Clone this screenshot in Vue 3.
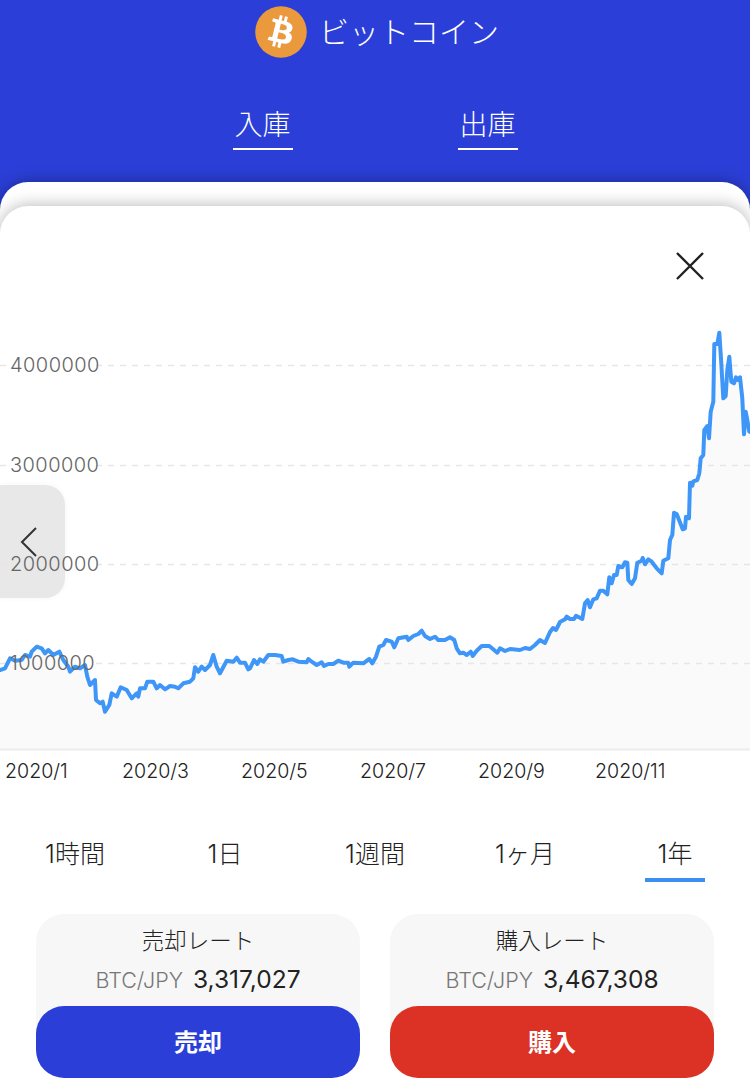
<script setup>
import { computed } from 'vue'

const ranges = ['1時間', '1日', '1週間', '1ヶ月', '1年']
const activeRange = '1年'

const rates = [
  { title: '売却レート', value: '3,317,027', action: '売却', kind: 'sell' },
  { title: '購入レート', value: '3,467,308', action: '購入', kind: 'buy' },
]

const xLabels = [
  { x: 5, text: '2020/1' },
  { x: 122, text: '2020/3' },
  { x: 241, text: '2020/5' },
  { x: 360, text: '2020/7' },
  { x: 478, text: '2020/9' },
  { x: 595, text: '2020/11' },
]

const yLabels = [
  { y: 365, text: '4000000' },
  { y: 465, text: '3000000' },
  { y: 564, text: '2000000' },
  { y: 663, text: '1000000' },
]

// traced in three stretches, each as 3x offsets from its own origin
const stretch = (ox, oy, pts) => pts.map(([x, y]) => [ox + x / 3, oy + y / 3])

const trace = [
  ...stretch(0, 470, [
    [0, 600], [15, 595], [30, 565], [45, 572], [65, 570], [75, 555], [90, 560], [95, 545], [110, 530], [125, 535],
    [135, 550], [145, 540], [160, 555], [178, 545], [190, 570], [205, 590], [210, 605], [225, 590], [240, 595],
    [255, 585], [262, 620], [270, 645], [285, 630], [288, 690], [300, 700], [308, 695], [315, 725], [328, 705],
    [335, 670], [350, 680], [362, 652], [380, 660], [395, 685], [410, 670], [415, 680], [420, 655], [435, 655],
    [442, 635], [460, 635], [470, 655], [480, 645], [495, 658], [510, 648], [525, 650], [535, 655], [550, 640],
    [570, 635], [580, 625], [585, 592], [595, 605], [605, 590], [615, 600], [630, 585], [640, 555], [650, 590],
    [660, 610], [680, 572], [700, 575], [710, 563], [720, 578], [735, 578], [745, 598],
  ]),
  ...stretch(250, 560, [
    [0, 325], [12, 300], [22, 312], [30, 298], [40, 305], [55, 285], [75, 285], [95, 288], [100, 305], [115, 300],
    [128, 298], [145, 305], [170, 307], [175, 297], [185, 305], [200, 315], [215, 307], [222, 318], [235, 312],
    [250, 312], [265, 302], [280, 308], [295, 308], [298, 320], [310, 308], [340, 310], [358, 297], [367, 310],
    [378, 290], [388, 260], [400, 255], [408, 240], [425, 245], [433, 262], [445, 235], [470, 230], [475, 240],
    [490, 228], [505, 222], [515, 212], [525, 228], [540, 237], [555, 230], [565, 240], [585, 240], [600, 232],
    [613, 240], [620, 265], [630, 280], [640, 278], [650, 285], [662, 275], [668, 288], [680, 272], [695, 258],
    [718, 258], [735, 272], [742, 278], [750, 265],
  ]),
  [505, 651], [510, 649], [520, 650], [525, 648], [530, 649], [535, 645], [540, 640], [545, 643], [550, 632],
  [553, 628], [556, 630], [560, 622],
  ...stretch(500, 320, [
    [195, 898], [200, 890], [210, 897], [222, 897], [228, 887], [240, 893], [247, 897], [255, 850], [263, 840],
    [270, 862], [280, 838], [290, 835], [300, 812], [310, 812], [322, 823], [328, 772], [335, 790], [342, 765],
    [350, 765], [355, 738], [367, 742], [375, 727], [382, 728], [385, 780], [395, 792], [405, 775], [412, 728],
    [425, 722], [428, 714], [435, 733], [445, 718], [455, 725], [470, 745], [485, 760], [490, 722], [505, 715],
    [510, 660], [517, 645], [522, 578], [530, 582], [548, 628], [555, 625], [558, 590], [567, 595], [570, 488],
    [577, 497], [580, 484], [592, 480], [598, 460], [602, 415], [610, 405], [613, 330], [622, 318], [627, 355],
    [632, 275], [640, 245], [643, 72], [652, 72], [658, 38], [664, 130], [670, 235], [677, 228], [682, 150],
    [688, 110], [694, 185], [702, 190], [708, 172], [713, 180], [720, 172], [727, 235], [732, 343], [737, 275],
    [742, 300], [748, 335], [750, 335],
  ]),
]

const linePoints = computed(() => trace.map(([x, y]) => `${x.toFixed(1)},${y.toFixed(1)}`).join(' '))
const areaPoints = computed(() => `0,749 ${linePoints.value} 750,749`)
</script>

<template>
  <div class="page">
    <header class="header">
      <div class="coin">
        <svg class="coin-icon" viewBox="0 0 24 24">
          <circle cx="12" cy="12" r="11.9" fill="#ea9a3c" />
          <path fill="#fff" d="M17.288 10.291c.24-1.59-.974-2.45-2.64-3.03l.54-2.153-1.315-.33-.525 2.107c-.345-.087-.705-.167-1.064-.25l.526-2.127-1.32-.33-.54 2.165c-.285-.067-.565-.132-.84-.2l-1.815-.45-.35 1.407s.975.225.955.236c.535.136.63.486.615.766l-1.477 5.92c-.075.166-.24.406-.614.314.015.02-.96-.24-.96-.24l-.66 1.51 1.71.426.93.242-.54 2.19 1.32.327.54-2.17c.36.1.705.19 1.05.273l-.51 2.154 1.32.33.545-2.19c2.24.427 3.93.257 4.64-1.774.57-1.637-.03-2.58-1.217-3.196.854-.193 1.5-.76 1.68-1.93h.01zm-3.01 4.22c-.404 1.64-3.157.75-4.05.53l.72-2.9c.896.23 3.757.67 3.33 2.37zm.41-4.24c-.37 1.49-2.662.735-3.405.55l.654-2.64c.744.18 3.137.524 2.75 2.084v.006z" />
        </svg>
        <span class="coin-name">ビットコイン</span>
      </div>
      <nav class="transfer">
        <a class="transfer-link">入庫</a>
        <a class="transfer-link">出庫</a>
      </nav>
    </header>

    <div class="back-card"></div>

    <section class="sheet">
      <div class="sheet-top">
        <button class="close" aria-label="close">
          <svg width="30" height="30" viewBox="0 0 30 30">
            <path d="M2 2 L28 28 M28 2 L2 28" stroke="#222" stroke-width="2.4" fill="none" />
          </svg>
        </button>
      </div>

      <div class="chart">
        <button class="prev" aria-label="previous">
          <svg width="20" height="32" viewBox="0 0 20 32">
            <path d="M17 2 L3 16 L17 30" stroke="#333" stroke-width="2" fill="none" />
          </svg>
        </button>
        <svg class="plot" width="750" height="480" viewBox="0 310 750 480">
          <polygon :points="areaPoints" fill="#fafafa" />
          <path
            v-for="row in yLabels"
            :key="row.y"
            :d="`M0 ${row.y}.5 H6 M96 ${row.y}.5 H750`"
            stroke="#e6e6e6"
            stroke-width="1.3"
            stroke-dasharray="6 6"
            fill="none"
          />
          <line x1="0" y1="749.5" x2="750" y2="749.5" stroke="#ececec" stroke-width="2" />
          <polyline :points="linePoints" fill="none" stroke="#3d96f8" stroke-width="4" stroke-linejoin="round" stroke-linecap="round" />
          <text v-for="row in yLabels" :key="row.text" class="y-label" x="10" :y="row.y + 6.5">{{ row.text }}</text>
          <text v-for="col in xLabels" :key="col.text" class="x-label" :x="col.x" y="778">{{ col.text }}</text>
        </svg>
      </div>

      <div class="ranges">
        <div v-for="r in ranges" :key="r" class="range" :class="{ active: r === activeRange }">{{ r }}</div>
      </div>

      <div class="rates">
        <div v-for="rate in rates" :key="rate.kind" class="rate-card">
          <div class="rate-title">{{ rate.title }}</div>
          <div class="rate-line">
            <span class="pair">BTC/JPY</span>
            <span class="price">{{ rate.value }}</span>
          </div>
          <button class="action" :class="rate.kind">{{ rate.action }}</button>
        </div>
      </div>
    </section>
  </div>
</template>

<style>
html, body {
  margin: 0;
  background: #fff;
}
</style>

<style scoped>
.page {
  width: 750px;
  height: 1092px;
  overflow: hidden;
  background: #2b3fd8;
  font-family: Inter, "Noto Sans CJK JP", sans-serif;
}

.header {
  height: 182px;
  color: #fff;
  display: flex;
  flex-direction: column;
  align-items: center;
}
.coin {
  display: flex;
  align-items: center;
  gap: 12px;
  height: 52px;
  margin-top: 6px;
  padding-left: 4px;
}
.coin-icon {
  width: 52px;
  height: 52px;
  display: block;
}
.coin-name {
  font-size: 30px;
  font-weight: 300;
  line-height: 50px;
}
.transfer {
  display: flex;
  gap: 165px;
  margin-top: 45px;
}
.transfer-link {
  width: 60px;
  height: 47px;
  box-sizing: border-box;
  border-bottom: 2px solid #fff;
  text-align: center;
  font-size: 28px;
  font-weight: 300;
  line-height: 44px;
}

.back-card {
  height: 60px;
  background: #fff;
  border-radius: 28px 28px 0 0;
  box-shadow: 0 0 16px rgba(0, 0, 0, 0.35);
}

.sheet {
  position: relative;
  height: 886px;
  margin-top: -36px;
  background: #fff;
  border-radius: 28px 28px 0 0;
  box-shadow: 0 -1px 16px rgba(0, 0, 0, 0.28);
  display: flex;
  flex-direction: column;
}
.sheet-top {
  height: 104px;
  display: flex;
  justify-content: flex-end;
  align-items: flex-start;
  padding: 45px 45px 0 0;
  box-sizing: border-box;
}
.close {
  width: 30px;
  height: 30px;
  padding: 0;
  border: 0;
  background: none;
}
.close svg {
  display: block;
}

.chart {
  position: relative;
  height: 480px;
}
.plot {
  position: relative;
  display: block;
}
.prev {
  position: absolute;
  left: 0;
  top: 175px;
  width: 65px;
  height: 113px;
  padding: 0 8px 0 0;
  border: 0;
  background: #e8e8e8;
  border-radius: 0 20px 20px 0;
  box-shadow: 0 0 6px rgba(0, 0, 0, 0.04);
  display: flex;
  align-items: center;
  justify-content: center;
  box-sizing: border-box;
}
.y-label {
  font-size: 20px;
  font-weight: 300;
  letter-spacing: 0.45px;
  fill: #666;
}
.x-label {
  font-size: 19.6px;
  font-weight: 300;
  fill: #222;
}

.ranges {
  display: grid;
  grid-template-columns: repeat(5, 150px);
  margin-top: 44px;
}
.range {
  justify-self: center;
  width: 60px;
  height: 48px;
  box-sizing: border-box;
  white-space: nowrap;
  font-size: 25px;
  font-weight: 300;
  line-height: 40px;
  color: #222;
  display: flex;
  justify-content: center;
}
.range.active {
  border-bottom: 4px solid #3d8ef0;
}

.rates {
  display: flex;
  justify-content: center;
  gap: 30px;
  margin-top: 32px;
}
.rate-card {
  width: 324px;
  height: 164px;
  background: #f7f7f7;
  border-radius: 28px;
  display: flex;
  flex-direction: column;
  align-items: center;
}
.rate-title {
  margin-top: 11px;
  font-size: 22.5px;
  line-height: 32px;
  font-weight: 300;
  color: #222;
}
.rate-line {
  display: flex;
  align-items: baseline;
  gap: 10px;
  margin-top: 5px;
  line-height: 34px;
}
.pair {
  font-size: 21.5px;
  font-weight: 300;
  color: #777;
}
.price {
  font-size: 24.5px;
  font-weight: 400;
  color: #222;
}
.action {
  width: 100%;
  height: 72px;
  margin-top: auto;
  padding: 0 0 4px;
  border: 0;
  border-radius: 28px;
  color: #fff;
  font-family: inherit;
  font-size: 24px;
  font-weight: 700;
}
.action.sell {
  background: #2b3fd8;
}
.action.buy {
  background: #dc3125;
}
</style>
